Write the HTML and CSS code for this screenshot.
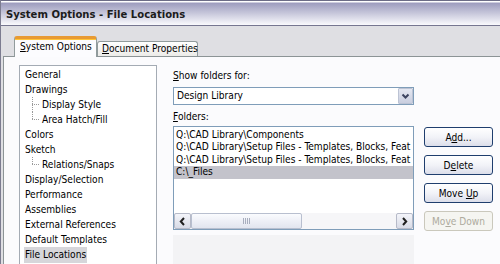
FILE: index.html
```html
<!DOCTYPE html>
<html>
<head>
<meta charset="utf-8">
<title>System Options - File Locations</title>
<link rel="stylesheet" href="styles.css">
</head>
<body>
<div class="window">
  <div class="titlebar">System Options - File Locations</div>
  <div class="frame">
    <div class="tabstrip">
      <div class="tab active"><u>S</u>ystem Options</div>
      <div class="tab"><u>D</u>ocument Properties</div>
    </div>
    <div class="panel">
      <ul class="tree">
        <li class="node">General</li>
        <li class="node">Drawings</li>
        <li class="child"><span class="tw"></span><span>Display Style</span></li>
        <li class="child"><span class="tw last"></span><span>Area Hatch/Fill</span></li>
        <li class="node">Colors</li>
        <li class="node">Sketch</li>
        <li class="child"><span class="tw last"></span><span>Relations/Snaps</span></li>
        <li class="node">Display/Selection</li>
        <li class="node">Performance</li>
        <li class="node">Assemblies</li>
        <li class="node">External References</li>
        <li class="node">Default Templates</li>
        <li class="node"><span class="sel">File Locations</span></li>
      </ul>
      <div class="right">
        <div class="label"><u>S</u>how folders for:</div>
        <div class="combo">
          <span class="combo-text">Design Library</span>
          <span class="combo-btn">
            <svg width="9" height="7" viewBox="0 0 9 7"><polyline points="1.5,1.5 4.5,4.5 7.5,1.5" fill="none" stroke="#3c4460" stroke-width="2"/></svg>
          </span>
        </div>
        <div class="label label2"><u>F</u>olders:</div>
        <div class="row">
          <div class="listbox">
            <ul class="items">
              <li>Q:\CAD Library\Components</li>
              <li>Q:\CAD Library\Setup Files - Templates, Blocks, Feat</li>
              <li>Q:\CAD Library\Setup Files - Templates, Blocks, Feat</li>
              <li class="selected">C:\_Files</li>
            </ul>
            <div class="hscroll">
              <span class="sbtn">
                <svg width="7" height="9" viewBox="0 0 7 9"><polyline points="5,1 1.8,4.5 5,8" fill="none" stroke="#202020" stroke-width="2"/></svg>
              </span>
              <span class="thumb"><span class="grip"></span></span>
              <span class="track"></span>
              <span class="sbtn">
                <svg width="7" height="9" viewBox="0 0 7 9"><polyline points="2,1 5.2,4.5 2,8" fill="none" stroke="#202020" stroke-width="2"/></svg>
              </span>
            </div>
          </div>
          <div class="buttons">
            <button class="btn">A<u>d</u>d...</button>
            <button class="btn">D<u>e</u>lete</button>
            <button class="btn">Move <u>U</u>p</button>
            <button class="btn" disabled>Mo<u>v</u>e Down</button>
          </div>
        </div>
        <div class="fade"></div>
      </div>
    </div>
  </div>
</div>
</body>
</html>
```
FILE: styles.css
```css
* { box-sizing: border-box; }
html, body { margin: 0; padding: 0; }
body {
  width: 500px;
  height: 264px;
  overflow: hidden;
  background: #fcfcfe;
  font-family: "DejaVu Sans Condensed", "DejaVu Sans", sans-serif;
  font-size: 10.1px;
  color: #000;
}
u { text-decoration: underline; text-underline-offset: 1px; }
ul { list-style: none; margin: 0; padding: 0; }

.window {
  width: 500px;
  height: 264px;
  display: flex;
  flex-direction: column;
  border-left: 1px solid #7c7c90;
  overflow: hidden;
}

.titlebar {
  height: 26px;
  flex: none;
  border-top: 1px solid #6c6c86;
  border-bottom: 1px solid #767690;
  background: linear-gradient(to bottom, #ffffff 0, #ffffff 1px, #9d9cbe 2px, #c6c6da 12px, #fafafd 100%);
  font-weight: bold;
  font-size: 11.2px;
  color: #1c1c1c;
  padding-left: 5px;
  display: flex;
  align-items: center;
  padding-top: 2px;
}

.frame {
  flex: 1;
  display: flex;
  flex-direction: column;
  background: #dfdfe3;
  padding-left: 2px;
  min-height: 0;
}

.tabstrip {
  height: 30px;
  flex: none;
  display: flex;
  align-items: flex-end;
  padding-left: 11px;
  position: relative;
  z-index: 1;
}
.tab {
  height: 15px;
  width: 101px;
  border: 1px solid #919b9c;
  border-bottom: none;
  border-radius: 3px 3px 0 0;
  background: linear-gradient(to bottom, #ffffff, #ecebe8);
  padding-left: 4px;
  line-height: 14px;
  white-space: nowrap;
}
.tab.active {
  width: 83px;
  height: 21px;
  margin-bottom: -1px;
  border-top: 3px solid #e89a33;
  box-shadow: inset 0 1px 0 #ffc53a;
  background: #fcfcfe;
  padding-left: 5px;
  line-height: 15px;
}

.panel {
  flex: 1;
  min-height: 0;
  border-top: 1px solid #8c9496;
  border-left: 1px solid #8c9496;
  background: #fbfbfd;
  padding: 8px 0 0 15px;
  display: flex;
  gap: 16px;
  overflow: hidden;
}

.tree {
  width: 138px;
  flex: none;
  align-self: stretch;
  border: 1px solid #a4abb4;
  border-bottom: none;
  background: #ffffff;
  padding-top: 1px;
}
.tree li {
  height: 15px;
  line-height: 15px;
  white-space: nowrap;
}
.tree .node { padding-left: 5px; }
.tree .sel {
  display: inline-block;
  background: #d6d6da;
  height: 16px;
  line-height: 16px;
  padding: 0 1px;
  margin-left: -1px;
  margin-top: -1px;
}
.tree .child {
  display: flex;
  padding-left: 12px;
}
.tw {
  width: 8px;
  height: 15px;
  margin-right: 2px;
  flex: none;
  background-image:
    linear-gradient(to bottom, #9a9a9a 50%, transparent 50%),
    linear-gradient(to right, #9a9a9a 50%, transparent 50%);
  background-size: 1px 2px, 2px 1px;
  background-repeat: repeat-y, repeat-x;
  background-position: 0 0, 0 7px;
}
.tw.last { height: 8px; }

.right {
  width: 320px;
  flex: none;
  display: flex;
  flex-direction: column;
  padding-top: 4px;
}
.label {
  height: 14px;
  line-height: 14px;
  margin-bottom: 4px;
}
.label2 {
  margin-top: 5px;
  margin-bottom: 2px;
}

.combo {
  width: 241px;
  height: 18px;
  border: 1px solid #7f9db9;
  background: #ffffff;
  display: flex;
  align-items: stretch;
}
.combo-text {
  flex: 1;
  padding-left: 3px;
  line-height: 16px;
}
.combo-btn {
  width: 15px;
  flex: none;
  background: linear-gradient(to bottom, #e4e7f1, #c9cedf);
  border: 1px solid #bcc3d4;
  border-radius: 1px;
  display: flex;
  align-items: center;
  justify-content: center;
}

.row {
  display: flex;
  gap: 10px;
  align-items: flex-start;
}
.listbox {
  width: 241px;
  height: 104px;
  flex: none;
  border: 1px solid #7f9db9;
  background: #ffffff;
  display: flex;
  flex-direction: column;
}
.items {
  flex: 1;
  overflow: hidden;
  padding-top: 1.5px;
}
.items li {
  height: 12.5px;
  line-height: 12.5px;
  padding-left: 2px;
  white-space: nowrap;
  letter-spacing: -0.01px;
}
.items li.selected { background: #c3c3cb; }

.hscroll {
  height: 16px;
  flex: none;
  display: flex;
  background: #f6f6f8;
}
.sbtn {
  width: 17px;
  flex: none;
  border: 1px solid #b6bac8;
  border-radius: 2px;
  background: linear-gradient(to bottom, #f4f5fa, #d8dbe6);
  display: flex;
  align-items: center;
  justify-content: center;
}
.thumb {
  width: 111px;
  flex: none;
  border: 1px solid #b8bfcf;
  border-radius: 2px;
  background: linear-gradient(to bottom, #fafbfe, #e2e5ef);
  display: flex;
  align-items: center;
  justify-content: center;
}
.grip {
  width: 7px;
  height: 6px;
  background-image: linear-gradient(to right, #a8aebe 1px, transparent 1px);
  background-size: 2px 6px;
}
.track { flex: 1; }

.buttons {
  display: flex;
  flex-direction: column;
  gap: 8px;
  padding-top: 1px;
}
.btn {
  width: 69px;
  height: 20px;
  padding: 0;
  border: 1px solid #1f3e6e;
  border-radius: 3px;
  background: linear-gradient(to bottom, #ffffff 0%, #f2f3f8 50%, #dcdeea 100%);
  font: inherit;
  color: #000;
  line-height: 17px;
}
.btn:disabled {
  border-color: #cac8bc;
  background: #f5f5f1;
  color: #aeab9e;
}

.fade {
  width: 241px;
  flex: 1;
  margin-top: 4px;
  background: #f3f3f5;
}
```
